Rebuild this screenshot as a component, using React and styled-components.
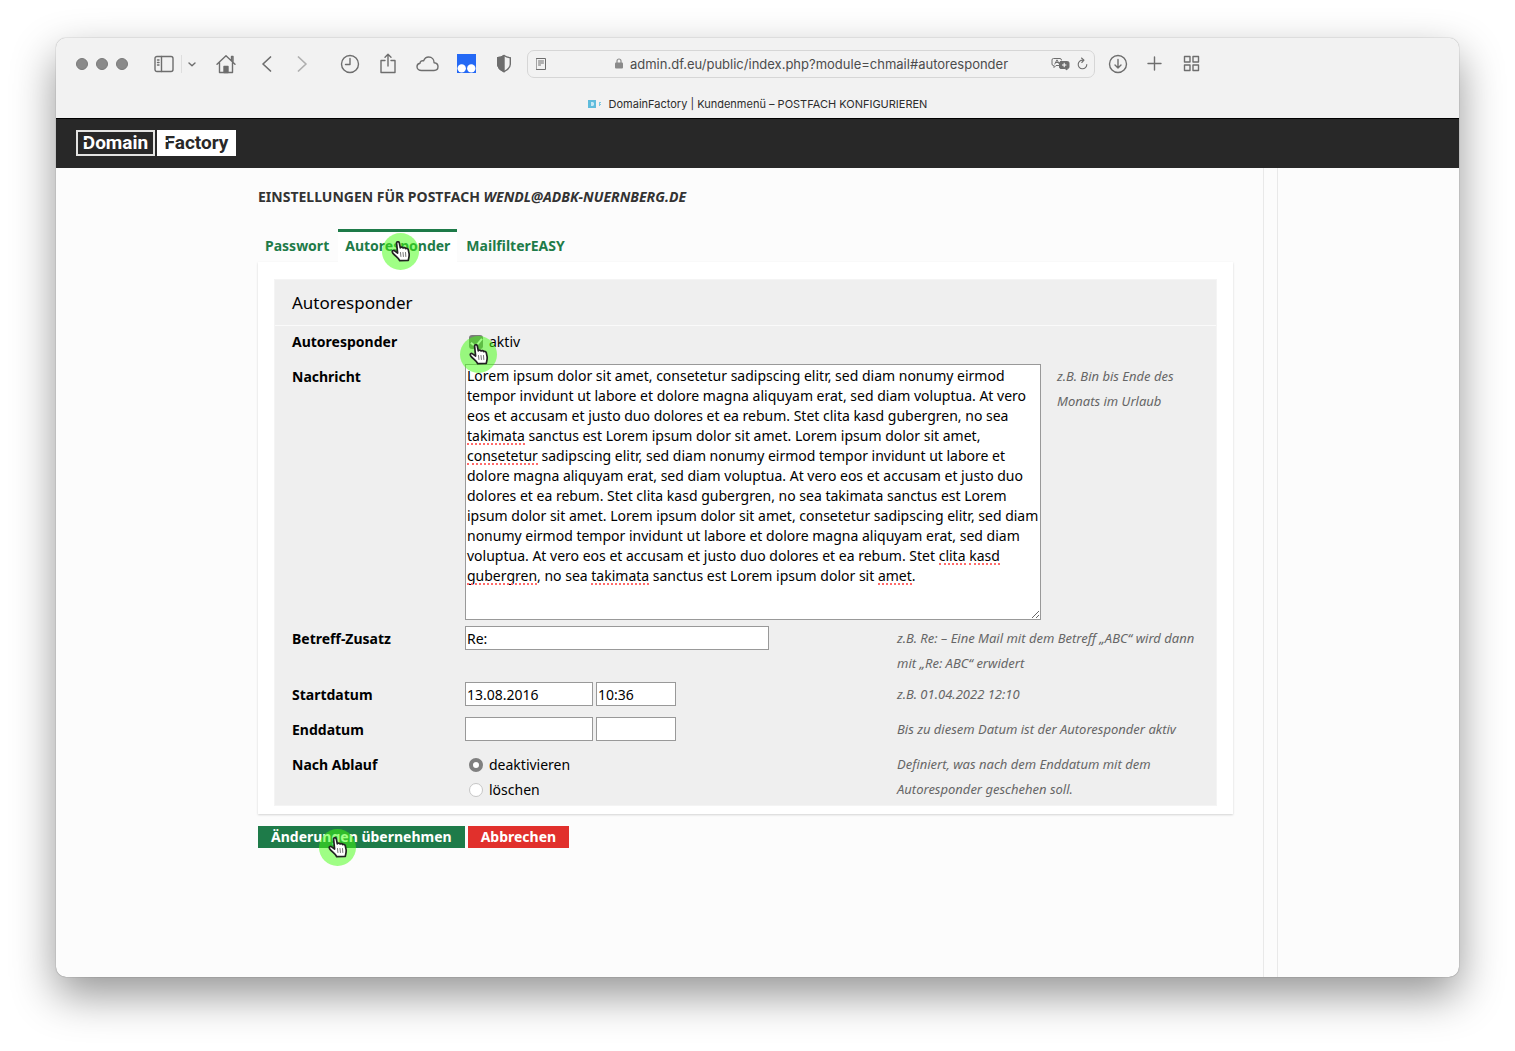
import React, { useState } from 'react';
import styled, { createGlobalStyle, css } from 'styled-components';

const GlobalStyle = createGlobalStyle`
	* {
		box-sizing: border-box;
	}

	body {
		background: #fff;
		color: #000;
		font-family: 'Noto Sans', 'Open Sans', sans-serif;
		font-size: 14px;
		margin: 0;
	}
`;

const Desktop = styled.div`
	display: flex;
	min-height: 100vh;
	padding: 38px 56px 74px;
`;

const Window = styled.div`
	background: #fcfcfc;
	border-radius: 10px;
	box-shadow: 0 0 1px rgba(0, 0, 0, 0.6), 0 18px 44px rgba(0, 0, 0, 0.42);
	display: flex;
	flex: 1;
	flex-direction: column;
	overflow: hidden;
`;

const Chrome = styled.div`
	background: #f2f2f2;
	font-family: Inter, 'Liberation Sans', sans-serif;
`;

const Toolbar = styled.div`
	align-items: center;
	color: #6e6e6e;
	display: flex;
	height: 51px;
	padding: 0 259px 0 20px;
`;

const Lights = styled.div`
	display: flex;
	gap: 8px;
	margin-right: 26px;
`;

const Light = styled.span`
	background: #8a8a8a;
	border: 1px solid #7a7a7a;
	border-radius: 50%;
	height: 12px;
	width: 12px;
`;

const ToolButton = styled.button`
	background: none;
	border: 0;
	color: inherit;
	display: flex;
	margin: 0 ${props => props.$gap || 0}px 0 0;
	opacity: ${props => (props.disabled ? 0.5 : 1)};
	padding: 0;
`;

const Separator = styled.span`
	background: #dedede;
	height: 18px;
	margin: 0 6px 0 7px;
	width: 1px;
`;

const AddressBar = styled.div`
	align-items: center;
	border: 1px solid #d6d6d6;
	border-radius: 7px;
	display: flex;
	flex: 1;
	height: 28px;
	margin-right: 13px;
	padding: 0 6px 0 8px;
`;

const Address = styled.div`
	align-items: center;
	color: #4c4c4c;
	display: flex;
	flex: 1;
	font-size: 13px;
	gap: 7px;
	justify-content: center;
	padding-left: 26px;
`;

const TabBar = styled.div`
	align-items: center;
	color: #2c2c2c;
	display: flex;
	font-size: 11px;
	gap: 7px;
	height: 29px;
	justify-content: center;
`;

const SiteHeader = styled.header`
	align-items: center;
	background: #282828;
	border-top: 1px solid #000;
	display: flex;
	height: 50px;
	padding: 0 20px 2px;
`;

const Logo = styled.a`
	display: flex;
	font-family: Roboto, 'Liberation Sans', sans-serif;
	font-size: 19px;
	font-weight: 700;
	gap: 2px;
	line-height: 22px;
	text-decoration: none;
`;

const LogoPart = styled.span`
	background: ${props => (props.$filled ? '#fff' : '#282828')};
	border: 2px solid ${props => (props.$filled ? '#fff' : '#e4e4e2')};
	color: ${props => (props.$filled ? '#282828' : '#fff')};
	min-width: 79px;
	position: relative;
	text-align: center;

	&:before {
		background: ${props => (props.$filled ? '#fff' : '#282828')};
		content: '';
		height: 2px;
		left: 5px;
		position: absolute;
		top: 8px;
		width: 4px;
	}
`;

const Page = styled.div`
	display: flex;
	flex: 1;
	margin: 0 auto;
	max-width: 1041px;
	width: 100%;
`;

const Main = styled.main`
	flex: 1;
	padding: 19px 30px 40px 21px;
`;

const Gutter = styled.div`
	border: solid #e9e9e9;
	border-width: 0 1px;
	width: 15px;
`;

const Title = styled.h1`
	color: #333;
	font-size: 14px;
	line-height: 20px;
	margin: 0 0 22px;
	text-transform: uppercase;
`;

const Tabs = styled.nav`
	display: flex;
	gap: 2px;
`;

const Tab = styled.a`
	border-top: 3px solid ${props => (props.$active ? '#1e7b49' : 'transparent')};
	background: ${props => (props.$active ? '#fff' : 'transparent')};
	color: #1e7b49;
	font-weight: 700;
	line-height: 28px;
	padding: 0 7px 2px;
	position: relative;
	text-decoration: none;
`;

const Panel = styled.div`
	background: #fff;
	box-shadow: 0 1px 2px rgba(0, 0, 0, 0.16);
	padding: 17px 16px 8px;
`;

const Card = styled.section`
	background: #efefef;
	border: 1px solid #f4f4f4;
`;

const CardTitle = styled.h2`
	border-bottom: 1px solid #fafafa;
	font-size: 17px;
	font-weight: 400;
	line-height: 45px;
	margin: 0;
	padding: 0 17px;
`;

const Rows = styled.div`
	display: grid;
	gap: 6px;
	padding: 3px 17px;
`;

const Row = styled.div`
	display: grid;
	grid-template-columns: 173px ${props => (props.$wide ? 592 : 432)}px 1fr;
	line-height: 25px;
	min-height: 29px;
`;

const Label = styled.label`
	font-weight: 700;
`;

const Field = styled.div`
	align-items: flex-start;
	display: flex;
	flex-wrap: wrap;
	gap: 0 3px;
`;

const Hint = styled.div`
	color: #666;
	font-size: 13px;
	font-style: italic;
`;

const boxed = css`
	background: #fff;
	border: 1px solid #999;
	border-radius: 0;
	font-family: inherit;
	font-size: 14px;
	padding: 0 1px;
`;

const TextInput = styled.input`
	${boxed}
	height: 24px;
	width: ${props => props.$width}px;
`;

const Editor = styled.div`
	position: relative;
	width: 576px;
`;

const Message = styled.textarea`
	${boxed}
	display: block;
	height: 256px;
	line-height: 20px;
	padding-top: 1px;
	resize: both;
	width: 100%;
`;

// same text flow as the textarea, only the dotted lines are visible
const SpellLayer = styled.div`
	inset: 0;
	line-height: 20px;
	padding: 2px 2px;
	pointer-events: none;
	position: absolute;
	visibility: hidden;
	white-space: pre-wrap;

	mark {
		position: relative;
	}

	mark:after {
		border-bottom: 2px dotted #ff6a6a;
		bottom: 0;
		content: '';
		left: 0;
		position: absolute;
		right: 0;
		visibility: visible;
	}
`;

const Choice = styled.label`
	align-items: center;
	display: flex;
	gap: 6px;
	padding-left: 4px;
	position: relative;
	width: 100%;
`;

const Check = styled.input`
	appearance: none;
	background: #7a7a7a;
	border-radius: 3px;
	display: grid;
	height: 14px;
	margin: 0;
	place-items: center;
	width: 14px;

	&:checked:before {
		border: solid #fff;
		border-width: 0 2px 2px 0;
		content: '';
		height: 9px;
		transform: rotate(40deg);
		width: 5px;
	}
`;

const Radio = styled.input`
	appearance: none;
	background: #fff;
	border: 1px solid #c6c6c6;
	border-radius: 50%;
	height: 14px;
	margin: 0;
	width: 14px;

	&:checked {
		border: 4px solid #808080;
	}
`;

const Actions = styled.div`
	display: flex;
	gap: 3px;
	margin-top: 12px;
`;

const Action = styled.button`
	background: ${props => (props.$danger ? '#e1302c' : '#1e7b49')};
	border: 0;
	color: #fff;
	font: 700 14px 'Noto Sans', 'Open Sans', sans-serif;
	line-height: 22px;
	padding: 0 13px;
	position: relative;
`;

// sits over the control it belongs to
const Pointer = styled.span`
	background: rgba(66, 255, 14, 0.5);
	border-radius: 50%;
	height: 37px;
	left: ${props => props.$left}px;
	padding: 8px 0 0 9px;
	pointer-events: none;
	position: absolute;
	top: ${props => props.$top}px;
	width: 37px;
	z-index: 1;

	svg {
		display: block;
	}
`;

const Icon = ({ size = 20, w = size, h = size, children, ...rest }) => (
	<svg
		width={w}
		height={h}
		viewBox={`0 0 ${w} ${h}`}
		fill="none"
		stroke="currentColor"
		strokeWidth="1.4"
		strokeLinecap="round"
		strokeLinejoin="round"
		aria-hidden="true"
		{...rest}
	>
		{children}
	</svg>
);

const HandPointer = props => (
	<Pointer {...props}>
		<Icon w={20} h={21} stroke="#222" strokeWidth="1.7">
			<path
				fill="#fff"
				d="M5.6 2.4C5.2.6 7.9.1 8.3 1.9l1 4.9c.7-1 2.4-.8 2.8.2.7-.8 2.3-.5 2.6.6.9-.6 2.3-.1 2.6 1.2l.8 3.9c.4 2.1-.3 3.9-.8 6.6l-8.6.3c-1-2.6-5.3-5-7.100-7.900-1-1.800.6-2.800 2-1.800l3 2.200z"
			/>
			<path stroke="#777" strokeWidth="1" d="M9.5 11.500l.4 4M12 11.500l.4 4M14.500 11.500l.3 4" />
		</Icon>
	</Pointer>
);

// [text, misspelled]
const MESSAGE = [
	['Lorem ipsum dolor sit amet, consetetur sadipscing elitr, sed diam nonumy eirmod tempor invidunt ut labore et dolore magna aliquyam erat, sed diam voluptua. At vero eos et accusam et justo duo dolores et ea rebum. Stet clita kasd gubergren, no sea '],
	['takimata', true],
	[' sanctus est Lorem ipsum dolor sit amet. Lorem ipsum dolor sit amet, '],
	['consetetur', true],
	[' sadipscing elitr, sed diam nonumy eirmod tempor invidunt ut labore et dolore magna aliquyam erat, sed diam voluptua. At vero eos et accusam et justo duo dolores et ea rebum. Stet clita kasd gubergren, no sea takimata sanctus est Lorem ipsum dolor sit amet. Lorem ipsum dolor sit amet, consetetur sadipscing elitr, sed diam nonumy eirmod tempor invidunt ut labore et dolore magna aliquyam erat, sed diam voluptua. At vero eos et accusam et justo duo dolores et ea rebum. Stet '],
	['clita', true],
	[' '],
	['kasd', true],
	[' '],
	['gubergren', true],
	[', no sea '],
	['takimata', true],
	[' sanctus est Lorem ipsum dolor sit '],
	['amet', true],
	['.'],
];

const MESSAGE_TEXT = MESSAGE.map(([text]) => text).join('');

const BrowserToolbar = () => (
	<Toolbar>
		<Lights>
			<Light />
			<Light />
			<Light />
		</Lights>
		<ToolButton aria-label="Seitenleiste">
			<Icon w={20} h={18}>
				<rect x="1" y="1.5" width="18" height="15" rx="2" />
				<path d="M7.5 1.5v15M3.5 5h1.5M3.5 7.5h1.5M3.5 10h1.5" />
			</Icon>
		</ToolButton>
		<Separator />
		<ToolButton aria-label="Tabgruppen" $gap={20}>
			<Icon size={8}>
				<path d="M1 3l3 2.8L7 3" />
			</Icon>
		</ToolButton>
		<ToolButton aria-label="Startseite" $gap={25}>
			<Icon w={20} h={20}>
				<path d="M1 10.2L10 1.8l9 8.4M3.5 8.5V18.5h13V8.5M15.5 6.5V2.5h1.5v5" />
				<path d="M8 18.5v-6h4v6z" fill="currentColor" />
			</Icon>
		</ToolButton>
		<ToolButton aria-label="Zurück" $gap={25}>
			<Icon w={11} h={18} strokeWidth="1.7">
				<path d="M9.5 2L2 9l7.5 7" />
			</Icon>
		</ToolButton>
		<ToolButton aria-label="Vorwärts" disabled $gap={32}>
			<Icon w={11} h={18} strokeWidth="1.7">
				<path d="M1.5 2L9 9l-7.5 7" />
			</Icon>
		</ToolButton>
		<ToolButton aria-label="Verlauf" $gap={19}>
			<Icon size={20}>
				<circle cx="10" cy="10" r="8.5" />
				<path d="M10 4.5V10.5H5.5" />
			</Icon>
		</ToolButton>
		<ToolButton aria-label="Teilen" $gap={19}>
			<Icon w={18} h={22}>
				<path d="M6 7.5H2V19.500h14V7.500h-4M9 13V1.500M6 4.300L9 1.300l3 3" />
			</Icon>
		</ToolButton>
		<ToolButton aria-label="iCloud-Tabs" $gap={18}>
			<Icon w={23} h={18}>
				<path d="M5.5 15.5C3 15.5 1 14 1 11.8c0-1.9 1.3-3.2 3-3.5 0-2 1.8-3 3.5-2.4C8.5 3.5 10.3 2 12.7 2c3.3 0 5.4 2.5 5.4 5.700 2.200.2 3.900 1.800 3.900 3.900 0 2.300-1.700 3.900-4 3.900z" />
			</Icon>
		</ToolButton>
		<ToolButton aria-label="Erweiterung" $gap={20}>
			<Icon size={19} stroke="none">
				<path fill="#2469f5" d="M0 0h19v19H0z" />
				<circle cx="4.7" cy="14.4" r="4.2" fill="#fff" />
				<circle cx="14.3" cy="14.4" r="4.2" fill="#fff" />
			</Icon>
		</ToolButton>
		<ToolButton aria-label="Datenschutzbericht" $gap={15}>
			<Icon w={16} h={19}>
				<path d="M8 1.5c2 1.5 4 2 6.3 2.3v6.5c0 3.2-3 5.7-6.3 7.4-3.3-1.7-6.3-4.2-6.3-7.4V3.8C4 3.5 6 3 8 1.5z" />
				<path fill="currentColor" d="M8 1.5v16.2c-3.3-1.7-6.3-4.2-6.3-7.4V3.8C4 3.5 6 3 8 1.5z" />
			</Icon>
		</ToolButton>
		<AddressBar>
			<Icon w={10} h={12} strokeWidth="1">
				<path d="M.5.5h9v11h-9zM2.500 3h5M2.500 5h5M2.500 7h2" />
			</Icon>
			<Address>
				<Icon w={8} h={11} stroke="#8a8a8a">
					<rect x="0" y="4.5" width="8" height="6" rx="1" fill="#8a8a8a" stroke="none" />
					<path d="M2 5V3a2 2 0 0 1 4 0v2" strokeWidth="1.2" />
				</Icon>
				<span>admin.df.eu/public/index.php?module=chmail#autoresponder</span>
			</Address>
			<ToolButton aria-label="Übersetzen" $gap={7}>
				<Icon w={19} h={14} strokeWidth="1">
					<path d="M8 8.5H5l-2 2v-2H2.500a1.500 1.500 0 0 1-1.500-1.500V3A1.500 1.500 0 0 1 2.500 1.500H9A1.500 1.500 0 0 1 10.500 3M3.800 7L6 2.800 8.200 7M4.600 5.500h2.600" />
					<path
						fill="currentColor"
						d="M10 4.5h6.500A1.500 1.500 0 0 1 18 6v4a1.500 1.500 0 0 1-1.500 1.500H16v1.500l-2-1.500h-4A1.500 1.500 0 0 1 8.500 10V6A1.500 1.500 0 0 1 10 4.500z"
					/>
					<path stroke="#fff" d="M13.2 6.2v3.6M11.4 8h3.6" />
				</Icon>
			</ToolButton>
			<ToolButton aria-label="Neu laden">
				<Icon w={11} h={13} strokeWidth="1.1">
					<path d="M6 3.2A4.3 4.3 0 1 0 9.8 7.5M4.5 1l2.5 2.2L4.8 5.5" />
				</Icon>
			</ToolButton>
		</AddressBar>
		<ToolButton aria-label="Downloads" $gap={19}>
			<Icon size={20}>
				<circle cx="10" cy="10" r="8.5" />
				<path d="M10 5.5v8.5M7 11l3 3 3-3" />
			</Icon>
		</ToolButton>
		<ToolButton aria-label="Neuer Tab" $gap={21}>
			<Icon size={15}>
				<path d="M7.5 1v13M1 7.5h13" />
			</Icon>
		</ToolButton>
		<ToolButton aria-label="Tabübersicht">
			<Icon size={17}>
				<path d="M1.5 1.5h5.500v5.500h-5.500zM10 1.500h5.500v5.500h-5.500zM1.500 10h5.500v5.500h-5.500zM10 10h5.500v5.500h-5.500z" />
			</Icon>
		</ToolButton>
	</Toolbar>
);

function App() {
	const [message, setMessage] = useState(MESSAGE_TEXT);

	return (
		<Desktop>
			<GlobalStyle />
			<Window>
				<Chrome>
					<BrowserToolbar />
					<TabBar>
						<Icon w={14} h={8} stroke="none">
							<path fill="#5fbcdc" d="M0 0h8v8H0z" />
							<path fill="#c5e8f4" d="M3 2h2l1 1v2L5 6H3z" />
							<path fill="#7cc9e4" d="M11 2h2v1h-1v1h1v1h-1v1h-1z" />
						</Icon>
						<span>DomainFactory | Kundenmenü – POSTFACH KONFIGURIEREN</span>
					</TabBar>
				</Chrome>
				<SiteHeader>
					<Logo href="#start">
						<LogoPart>Domain</LogoPart>
						<LogoPart $filled>Factory</LogoPart>
					</Logo>
				</SiteHeader>
				<Page>
					<Main>
						<Title>
							Einstellungen für Postfach <em>wendl@adbk-nuernberg.de</em>
						</Title>
						<Tabs>
							<Tab href="#passwort">Passwort</Tab>
							<Tab href="#autoresponder" $active>
								Autoresponder
								<HandPointer $left={44} $top={1} />
							</Tab>
							<Tab href="#mailfilter">MailfilterEASY</Tab>
						</Tabs>
						<form onSubmit={event => event.preventDefault()}>
							<Panel>
								<Card>
									<CardTitle>Autoresponder</CardTitle>
									<Rows>
										<Row>
											<Label htmlFor="active">Autoresponder</Label>
											<Field>
												<Choice>
													<Check type="checkbox" id="active" defaultChecked />
													aktiv
													<HandPointer $left={-5} $top={7} />
												</Choice>
											</Field>
										</Row>
										<Row $wide>
											<Label htmlFor="message">Nachricht</Label>
											<Editor>
												<Message
													id="message"
													spellCheck={false}
													value={message}
													onChange={event => setMessage(event.target.value)}
												/>
												{message === MESSAGE_TEXT && (
													<SpellLayer aria-hidden="true">
														{MESSAGE.map(([text, wrong], index) =>
															wrong ? <mark key={index}>{text}</mark> : text
														)}
													</SpellLayer>
												)}
											</Editor>
											<Hint>z.B. Bin bis Ende des Monats im Urlaub</Hint>
										</Row>
										<Row>
											<Label htmlFor="subject">Betreff-Zusatz</Label>
											<Field>
												<TextInput id="subject" type="text" $width={304} defaultValue="Re:" />
											</Field>
											<Hint>z.B. Re: – Eine Mail mit dem Betreff „ABC“ wird dann mit „Re: ABC“ erwidert</Hint>
										</Row>
										<Row>
											<Label htmlFor="start">Startdatum</Label>
											<Field>
												<TextInput id="start" type="text" $width={128} defaultValue="13.08.2016" />
												<TextInput type="text" aria-label="Startzeit" $width={80} defaultValue="10:36" />
											</Field>
											<Hint>z.B. 01.04.2022 12:10</Hint>
										</Row>
										<Row>
											<Label htmlFor="end">Enddatum</Label>
											<Field>
												<TextInput id="end" type="text" $width={128} />
												<TextInput type="text" aria-label="Endzeit" $width={80} />
											</Field>
											<Hint>Bis zu diesem Datum ist der Autoresponder aktiv</Hint>
										</Row>
										<Row>
											<Label as="span" id="expiry">
												Nach Ablauf
											</Label>
											<Field role="radiogroup" aria-labelledby="expiry">
												<Choice>
													<Radio type="radio" name="expiry" defaultChecked />
													deaktivieren
												</Choice>
												<Choice>
													<Radio type="radio" name="expiry" />
													löschen
												</Choice>
											</Field>
											<Hint>Definiert, was nach dem Enddatum mit dem Autoresponder geschehen soll.</Hint>
										</Row>
									</Rows>
								</Card>
							</Panel>
							<Actions>
								<Action type="submit">
									Änderungen übernehmen
									<HandPointer $left={61} $top={3} />
								</Action>
								<Action type="button" $danger>
									Abbrechen
								</Action>
							</Actions>
						</form>
					</Main>
					<Gutter />
				</Page>
			</Window>
		</Desktop>
	);
}

export default App;
